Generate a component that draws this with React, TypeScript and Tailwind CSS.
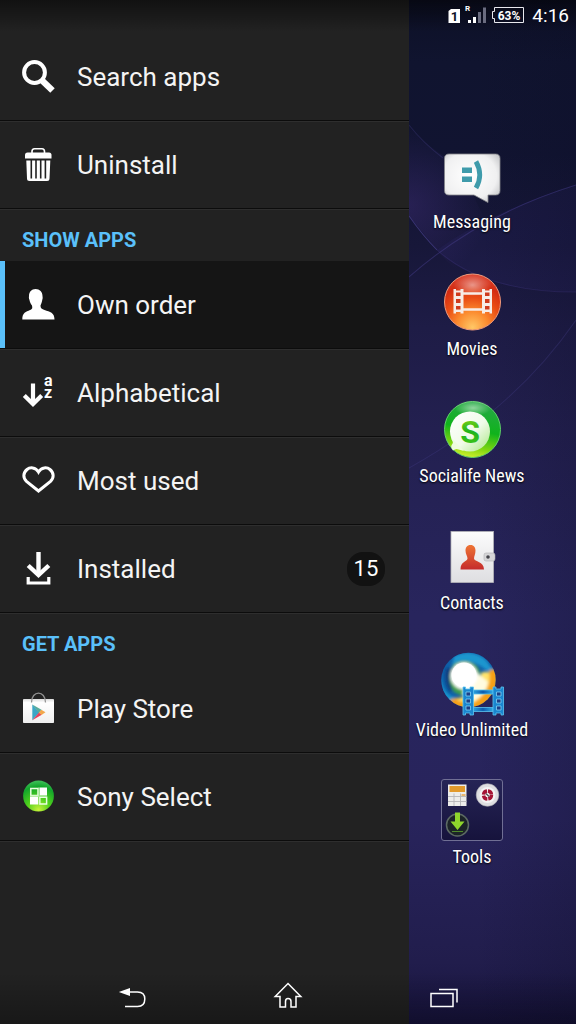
import React, { useState } from 'react';

interface MenuItem {
  id: string;
  label: string;
  icon: React.ReactNode;
  badge?: number;
}

interface AppShortcut {
  label: string;
  icon: React.ReactNode;
}

const SearchIcon = () => (
  <svg viewBox="0 0 34 34" className="w-[34px] h-[34px]" fill="none" stroke="#fff" aria-hidden="true">
    <circle cx="12.5" cy="12.5" r="10.4" strokeWidth="4" />
    <path d="M19 19.5 L30.5 30.5" strokeWidth="6.4" />
  </svg>
);

const TrashIcon = () => (
  <svg viewBox="0 0 34 34" className="w-[34px] h-[34px]" aria-hidden="true">
    <path d="M10 5 V3.5 Q10 0.8 12.5 0.8 H20 Q22.5 0.8 22.5 3.5 V5" fill="none" stroke="#fff" strokeWidth="1.6" />
    <path d="M3 7 Q3 4.5 5.5 4.5 H27 Q29.5 4.5 29.5 7 V10.5 H3 Z" fill="#fff" />
    <path d="M4.3 12.5 H28.3 L27.5 30.5 Q27.5 33 25 33 H7.5 Q5 33 5 30.5 Z" fill="#fff" />
    <path d="M9.3 12 V30.5 M14 12 V30.5 M18.7 12 V30.5 M23.4 12 V30.5" stroke="#222" strokeWidth="1.6" />
  </svg>
);

const PersonIcon = () => (
  <svg viewBox="0 0 34 34" className="w-[34px] h-[34px]" fill="#fff" aria-hidden="true">
    <path d="M13.5 1 C17.8 1 20.5 4 20.5 8 C20.5 9.3 21 9.8 20.3 11.7 C19.8 14.5 19 16 18.5 17.5 C18.3 20.3 20 21 22.5 22 C28 23.8 32.5 24.5 32.5 31.5 H0.3 C0.3 24.5 4 23.8 8 22 C10.5 21 10.5 20.3 10 17.5 C9 16 8 14.5 7.4 11.7 C6.6 9.8 7 9.3 7 8 C7 4 9.5 1 13.5 1 Z" />
  </svg>
);

const SortIcon = () => (
  <svg viewBox="0 0 34 34" className="w-[34px] h-[34px] overflow-visible" aria-hidden="true">
    <path d="M11 7.5 V28 M2.3 19.5 L11 28 L19.7 19.5" fill="none" stroke="#fff" strokeWidth="4.2" />
    <text fontSize="16" fontWeight="700" fill="#fff" className="font-['Roboto',sans-serif]">
      <tspan x="22" y="9.5">a</tspan>
      <tspan x="22" y="22">z</tspan>
    </text>
  </svg>
);

const HeartIcon = () => (
  <svg viewBox="0 0 34 34" className="w-[34px] h-[34px]" fill="none" stroke="#fff" strokeWidth="3" aria-hidden="true">
    <path d="M16.5 8 C13.5 3 8 3 5 5.5 C1 9 0.8 13.8 4.5 17.3 L16.5 27 L28.5 17.3 C32.2 13.8 32 9 28 5.5 C25 3 19.5 3 16.5 8 Z" />
  </svg>
);

const DownloadIcon = () => (
  <svg viewBox="0 0 34 34" className="w-[34px] h-[34px]" fill="none" stroke="#fff" aria-hidden="true">
    <path d="M16.5 0 V22" strokeWidth="4.4" />
    <path d="M6.2 13.5 L16.5 23 L26.8 13.5" strokeWidth="4.4" />
    <path d="M6.2 25 V31 H26.8 V25" strokeWidth="3.2" />
  </svg>
);

const PlayStoreIcon = () => (
  <svg viewBox="0 0 34 34" className="w-[34px] h-[34px]" aria-hidden="true">
    <defs>
      <linearGradient id="bag" x1="0" y1="0" x2="0" y2="1">
        <stop offset="0" stopColor="#dcdcdc" />
        <stop offset="0.15" stopColor="#ffffff" />
        <stop offset="1" stopColor="#efefef" />
      </linearGradient>
    </defs>
    <rect x="1" y="7" width="31" height="24" rx="0.8" fill="url(#bag)" />
    <path d="M9.5 10.5 C9.5 -2 23.5 -2 23.5 10.5" fill="none" stroke="#929292" strokeWidth="1.3" />
    <path d="M10.3 12.5 V28.3 L17.5 20.5 Z" fill="#3ba6c6" />
    <path d="M10.3 12.5 L19.5 17.8 L17 21 Z" fill="#5aab9b" />
    <path d="M10.3 28.3 L17 20.5 L19.8 22.8 Z" fill="#e8415d" />
    <path d="M16.8 20.7 L19.3 17.7 L23.5 20.3 L19.5 23 Z" fill="#f2a74b" />
  </svg>
);

const SonySelectIcon = () => (
  <svg viewBox="0 0 34 34" className="w-[34px] h-[34px]" aria-hidden="true">
    <defs>
      <radialGradient id="select" cx="0.5" cy="0.95" r="0.95">
        <stop offset="0" stopColor="#c8f23a" />
        <stop offset="0.4" stopColor="#4fd01c" />
        <stop offset="0.8" stopColor="#12a62c" />
        <stop offset="1" stopColor="#3fc05a" />
      </radialGradient>
    </defs>
    <circle cx="16.5" cy="16" r="15.4" fill="url(#select)" />
    <path d="M17.5 7.5 H25 V15.5 H17.5 Z M8 16.5 H16 V24.5 H8 Z" fill="#fff" />
    <path d="M8.8 8.5 H16 V15.5 H8.8 Z M17.8 17.3 H24.6 V24 H17.8 Z" fill="none" stroke="#e9ffe0" strokeWidth="1.5" />
    <path d="M8 16 H25 M16.8 7.5 V24.5" stroke="#bdf0b0" strokeWidth="0.8" />
  </svg>
);

const MessagingIcon = () => (
  <svg viewBox="0 0 64 64" className="w-16 h-16" aria-hidden="true">
    <defs>
      <radialGradient id="bubble" cx="0.45" cy="0.45" r="0.75">
        <stop offset="0" stopColor="#ffffff" />
        <stop offset="0.65" stopColor="#f0f0f1" />
        <stop offset="1" stopColor="#b4b5b8" />
      </radialGradient>
    </defs>
    <path d="M9 10 H55.5 Q60 10 60 14.5 V46.5 Q60 51 55.5 51 H48 V58.5 L34 51 H9 Q4.5 51 4.5 46.5 V14.5 Q4.5 10 9 10 Z" fill="url(#bubble)" stroke="#85868c" strokeWidth="0.8" />
    <path d="M22 23.5 H32 V29 H22 Z M22 32.5 H32 V38 H22 Z" fill="#3f9bab" />
    <path d="M36 17.5 Q43.5 31 36 44" fill="none" stroke="#3f9bab" strokeWidth="4.8" />
  </svg>
);

const MoviesIcon = () => (
  <svg viewBox="0 0 64 64" className="w-16 h-16" aria-hidden="true">
    <defs>
      <radialGradient id="movies" cx="0.5" cy="0.95" r="0.95">
        <stop offset="0" stopColor="#ffc766" />
        <stop offset="0.3" stopColor="#fb8a2e" />
        <stop offset="0.55" stopColor="#ea4d14" />
        <stop offset="0.8" stopColor="#d42c12" />
        <stop offset="1" stopColor="#d9402c" />
      </radialGradient>
      <radialGradient id="moviesShine">
        <stop offset="0" stopColor="#fff" stopOpacity="0.5" />
        <stop offset="1" stopColor="#fff" stopOpacity="0" />
      </radialGradient>
    </defs>
    <circle cx="32.5" cy="31" r="28" fill="url(#movies)" stroke="#f09a7c" strokeWidth="1" />
    <ellipse cx="32.5" cy="14" rx="19" ry="11" fill="url(#moviesShine)" />
    <path d="M23 22.5 H42 M23 38.5 H42" stroke="#f7ece6" strokeWidth="2.6" />
    <path d="M13.500 18 H16 V19.500 H20.500 V18 H23.500 V42.500 H20.500 V41 H16 V42.500 H13.500 Z M42 18 H45 V19.500 H49.500 V18 H52 V42.500 H49.500 V41 H45 V42.500 H42 Z" fill="#f7ece6" />
    <path d="M16 21.500 H20.500 V25 H16 Z M16 28 H20.500 V32 H16 Z M16 35 H20.500 V38.500 H16 Z M45 21.500 H49.500 V25 H45 Z M45 28 H49.500 V32 H45 Z M45 35 H49.500 V38.500 H45 Z" fill="#cf3a1c" />
  </svg>
);

const SocialifeIcon = () => (
  <svg viewBox="0 0 64 64" className="w-16 h-16" aria-hidden="true">
    <defs>
      <linearGradient id="social" x1="0.6" y1="0" x2="0.4" y2="1">
        <stop offset="0" stopColor="#27a848" />
        <stop offset="0.5" stopColor="#10b31c" />
        <stop offset="0.8" stopColor="#7ed60f" />
        <stop offset="1" stopColor="#d3f02f" />
      </linearGradient>
      <radialGradient id="socialShine">
        <stop offset="0" stopColor="#fff" stopOpacity="0.5" />
        <stop offset="1" stopColor="#fff" stopOpacity="0" />
      </radialGradient>
      <linearGradient id="socialInner" x1="0" y1="0" x2="1" y2="1">
        <stop offset="0" stopColor="#ffffff" />
        <stop offset="0.55" stopColor="#f1fbea" />
        <stop offset="1" stopColor="#a9e683" />
      </linearGradient>
      <linearGradient id="letter" x1="0.5" y1="0" x2="0.5" y2="1">
        <stop offset="0" stopColor="#9fdc16" />
        <stop offset="0.5" stopColor="#1fb41c" />
        <stop offset="1" stopColor="#4ecb18" />
      </linearGradient>
    </defs>
    <circle cx="32.5" cy="31.5" r="28" fill="url(#social)" stroke="#5fd06a" strokeWidth="1" />
    <ellipse cx="33" cy="10" rx="18" ry="8" fill="url(#socialShine)" />
    <circle cx="30" cy="33.5" r="20" fill="url(#socialInner)" />
    <path d="M11.5 40 Q14 44 12 46.5 Q10 49 13 52.5 Q16 50 18.5 51.5 L24 53 Z" fill="#eefbe0" />
    <text x="30" y="45" textAnchor="middle" fontSize="32" fontWeight="700" fill="url(#letter)" className="font-['Roboto',sans-serif]">S</text>
  </svg>
);

const ContactsIcon = () => (
  <svg viewBox="0 0 64 64" className="w-16 h-16" aria-hidden="true">
    <defs>
      <linearGradient id="contact" x1="0" y1="0" x2="0" y2="1">
        <stop offset="0" stopColor="#ee7434" />
        <stop offset="1" stopColor="#c52c2c" />
      </linearGradient>
      <linearGradient id="book" x1="0" y1="0" x2="0" y2="1">
        <stop offset="0" stopColor="#fcfcfc" />
        <stop offset="1" stopColor="#dedee1" />
      </linearGradient>
    </defs>
    <rect x="11" y="6.5" width="42.5" height="51" fill="url(#book)" stroke="#b5b5ba" strokeWidth="0.8" />
    <path d="M30.5 20 C34 20 35.5 22.5 35.5 25.5 C35.5 29 34 31 34 33.5 C34.5 37 44 36 44 44.5 H20.5 C20.5 36 27 37 27.5 33.5 C27.5 31 25.5 29 25.5 25.5 C25.5 22.5 27 20 30.5 20 Z" fill="url(#contact)" />
    <rect x="44" y="28" width="11" height="8" rx="2" fill="#d6d6d8" stroke="#b0b0b4" strokeWidth="0.6" />
    <circle cx="48" cy="32" r="1.8" fill="#44444a" />
  </svg>
);

const VideoIcon = () => (
  <svg viewBox="0 0 64 64" className="w-16 h-16" aria-hidden="true">
    <defs>
      <clipPath id="disc">
        <circle cx="28.5" cy="28" r="27.2" />
      </clipPath>
      <filter id="soft" x="-30%" y="-30%" width="160%" height="160%">
        <feGaussianBlur stdDeviation="1.6" />
      </filter>
      <linearGradient id="film" x1="0" y1="0" x2="1" y2="0">
        <stop offset="0" stopColor="#2aa4e0" />
        <stop offset="0.5" stopColor="#0d5cae" />
        <stop offset="1" stopColor="#2fa9e2" />
      </linearGradient>
    </defs>
    <g clipPath="url(#disc)">
      <rect width="64" height="64" fill="#0f5fa8" />
      <g filter="url(#soft)">
        <path d="M14 4 Q32 -4 46 8 L54 20 L46 18 Q30 4 12 14 Z" fill="#1b96cf" />
        <path d="M0 22 Q2 44 18 46 L10 52 L-4 36 Z" fill="#1296cf" />
        <path d="M6 16 Q3 30 10 40 L14 36 Q8 26 12 16 Z" fill="#103c80" />
        <path d="M58 16 Q60 44 38 60 L8 54 Q8 47 16 46 Q42 46 50 18 Z" fill="#f6a012" />
        <path d="M49 20 Q53 38 32 52 L16 48 Q34 42 42 20 Z" fill="#ffe36a" />
        <path d="M14 12 Q26 5 37 14 Q44 24 38 38 Q26 48 14 40 Q5 26 14 12 Z" fill="#3f9f4c" />
        <path d="M34 18 L48 30 Q46 42 34 49 L22 42 Z" fill="#fffbe0" />
        <circle cx="24" cy="24" r="13.5" fill="#fff" />
      </g>
      <circle cx="24" cy="23" r="12.5" fill="#fff" />
    </g>
    <path d="M33 40 H53 M33 57.5 H53" stroke="url(#film)" strokeWidth="4" />
    <path d="M33 38 H53 M33 42 H53 M33 55.5 H53 M33 59.5 H53" stroke="#5cc4f0" strokeWidth="0.8" />
    <path d="M23 35 H25.5 V37 H30 V35 H33.5 V63 H30 V61 H25.5 V63 H23 Z M53 35 H56 V37 H61 V35 H63.5 V63 H61 V61 H56 V63 H53 Z" fill="#1a86cf" stroke="#5cc4f0" strokeWidth="0.8" />
    <path d="M26 40 H30.5 V44 H26 Z M26 47 H30.5 V51 H26 Z M26 54 H30.5 V58 H26 Z M56.5 40 H61 V44 H56.5 Z M56.5 47 H61 V51 H56.5 Z M56.5 54 H61 V58 H56.5 Z" fill="#1d3f86" stroke="#7fd2f5" strokeWidth="0.8" />
  </svg>
);

const ToolsIcon = () => (
  <svg viewBox="0 0 64 64" className="w-16 h-16" aria-hidden="true">
    <defs>
      <linearGradient id="folder" x1="0" y1="0" x2="0" y2="1">
        <stop offset="0" stopColor="#262456" />
        <stop offset="1" stopColor="#16133c" />
      </linearGradient>
    </defs>
    <rect x="1.5" y="0.5" width="61" height="61" rx="2.5" fill="url(#folder)" stroke="#706f94" strokeWidth="1" />
    <rect x="8" y="5.5" width="18.5" height="21.5" fill="#ededeb" />
    <rect x="9.5" y="7" width="15.5" height="6" fill="#e29a2c" />
    <path d="M8 17.5 H26.5 M8 22.5 H26.5 M14 14.5 V27 M20.5 14.5 V27" stroke="#b5b5b8" strokeWidth="0.9" />
    <path d="M21.5 16 H25.5" stroke="#e7a548" strokeWidth="1.5" />
    <circle cx="47.5" cy="16" r="11.3" fill="#dedee1" stroke="#a9a9b2" strokeWidth="0.6" />
    <circle cx="47.5" cy="16" r="8" fill="#f4f4f5" />
    <circle cx="47.5" cy="16" r="4" fill="#fff" stroke="#a51535" strokeWidth="3.4" strokeDasharray="5.3 0.98" />
    <path d="M46 14.5 L49 17.5" stroke="#555" strokeWidth="1.5" />
    <circle cx="17.5" cy="46" r="11" fill="#1c2427" stroke="#5c6a63" strokeWidth="1.5" />
    <path d="M15 33.5 H20 V42.5 H24.5 L17.5 51 L10.5 42.5 H15 Z" fill="#8fd52c" />
    <path d="M12 52.5 H23" stroke="#4f8a2b" strokeWidth="1" />
  </svg>
);

const MAIN_ITEMS: MenuItem[] = [
  { id: 'search', label: 'Search apps', icon: <SearchIcon /> },
  { id: 'uninstall', label: 'Uninstall', icon: <TrashIcon /> },
];

const SHOW_ITEMS: MenuItem[] = [
  { id: 'own', label: 'Own order', icon: <PersonIcon /> },
  { id: 'alphabetical', label: 'Alphabetical', icon: <SortIcon /> },
  { id: 'used', label: 'Most used', icon: <HeartIcon /> },
  { id: 'installed', label: 'Installed', icon: <DownloadIcon />, badge: 15 },
];

const GET_ITEMS: MenuItem[] = [
  { id: 'play', label: 'Play Store', icon: <PlayStoreIcon /> },
  { id: 'select', label: 'Sony Select', icon: <SonySelectIcon /> },
];

const SHORTCUTS: AppShortcut[] = [
  { label: 'Messaging', icon: <MessagingIcon /> },
  { label: 'Movies', icon: <MoviesIcon /> },
  { label: 'Socialife News', icon: <SocialifeIcon /> },
  { label: 'Contacts', icon: <ContactsIcon /> },
  { label: 'Video Unlimited', icon: <VideoIcon /> },
  { label: 'Tools', icon: <ToolsIcon /> },
];

interface MenuRowProps {
  item: MenuItem;
  active?: boolean;
  onClick?: () => void;
}

const MenuRow: React.FC<MenuRowProps> = ({ item, active, onClick }) => (
  <li className="border-b border-[#0c0c0c] shadow-[0_1px_0_#2e2e2e]">
    <button
      type="button"
      onClick={onClick}
      className={`flex items-center w-full h-[87px] border-l-[5px] pl-[17px] pr-6 text-left ${
        active ? 'bg-[#151515] border-[#5ac0fa]' : 'border-transparent'
      }`}
    >
      <span className="shrink-0">{item.icon}</span>
      <span className="ml-[21px] flex-1 text-[26px] leading-8 text-[#f4f4f4]">{item.label}</span>
      {item.badge !== undefined && (
        <span className="flex items-center justify-center w-[38px] h-[34px] rounded-2xl bg-[#121212] text-[22px] leading-6 text-white">
          {item.badge}
        </span>
      )}
    </button>
  </li>
);

const SectionTitle: React.FC<{ children: React.ReactNode }> = ({ children }) => (
  <h2 className="h-[52px] pl-[22px] pt-[19px] text-xl leading-6 font-bold text-[#5ac0fa]">{children}</h2>
);

const Wallpaper = () => (
  <svg viewBox="0 0 167 1024" preserveAspectRatio="none" className="absolute inset-0 w-full h-full" aria-hidden="true">
    <defs>
      <linearGradient id="sky" x1="0" y1="0" x2="0" y2="1">
        <stop offset="0" stopColor="#0d1026" />
        <stop offset="0.06" stopColor="#10142f" />
        <stop offset="0.15" stopColor="#111431" />
        <stop offset="0.24" stopColor="#171739" />
        <stop offset="0.32" stopColor="#1e1c46" />
        <stop offset="0.42" stopColor="#232050" />
        <stop offset="0.6" stopColor="#28255d" />
        <stop offset="0.8" stopColor="#28245c" />
        <stop offset="0.94" stopColor="#211d4c" />
        <stop offset="1" stopColor="#181440" />
      </linearGradient>
      <radialGradient id="sheen" gradientUnits="userSpaceOnUse" cx="0" cy="205" r="80">
        <stop offset="0" stopColor="#43307f" stopOpacity="0.4" />
        <stop offset="1" stopColor="#43307f" stopOpacity="0" />
      </radialGradient>
      <linearGradient id="edge" x1="0" y1="0" x2="1" y2="0">
        <stop offset="0.4" stopColor="#0b0b24" stopOpacity="0" />
        <stop offset="1" stopColor="#0b0b24" stopOpacity="0.2" />
      </linearGradient>
    </defs>
    <rect width="167" height="1024" fill="url(#sky)" />
    <path d="M0 125 Q18 148 50 165 L110 292 Q60 290 28 250 L0 216 Z" fill="url(#sheen)" />
    <path d="M28 250 Q80 212 167 185 V292 Q70 292 28 250 Z" fill="#3b3384" fillOpacity="0.14" />
    <rect width="167" height="1024" fill="url(#edge)" />
    <g fill="none" stroke="#4a4190">
      <path d="M0 277 Q70 215 167 185" strokeOpacity="0.45" />
      <path d="M0 216 Q14 236 28 250" strokeOpacity="0.7" />
      <path d="M28 250 Q75 292 167 292" strokeOpacity="0.25" />
      <path d="M0 468 Q105 410 167 320" strokeOpacity="0.3" />
      <path d="M0 125 Q14 143 34 158" strokeOpacity="0.3" />
    </g>
  </svg>
);

const StatusBar = () => (
  <header className="absolute inset-x-0 top-0 z-10 flex h-8 items-center justify-end pr-[7px] bg-linear-to-b from-black/50 to-transparent text-white">
    <svg viewBox="0 0 79 28" className="w-[79px] h-7" aria-hidden="true">
      <path d="M3.5 9 L6 7 H15 V21 H3.5 Z" fill="#fff" />
      <text x="9.5" y="18.5" textAnchor="middle" fontSize="13" fontWeight="700" fill="#0d1026" className="font-['Roboto',sans-serif]">1</text>
      <text x="20" y="8.5" fontSize="8" fontWeight="700" fill="#fff" className="font-['Roboto',sans-serif]">R</text>
      <path d="M23 18 H26 V21 H23 Z M28 15 H31 V21 H28 Z" fill="#fff" />
      <path d="M33 10 H36 V21 H33 Z M38 5.5 H41 V21 H38 Z" fill="#6a6c80" />
      <path d="M49.5 5.5 H78.5 V20.5 H49.5 V16.5 H47.5 V9.5 H49.5 Z" fill="none" stroke="#e8e8ee" />
      <text x="64" y="17.5" textAnchor="middle" fontSize="12" fontWeight="700" fill="#fff" className="font-['Roboto',sans-serif]">63%</text>
    </svg>
    <time className="ml-2 text-[19px] leading-6">4:16</time>
  </header>
);

const NavBar = () => (
  <nav className="absolute inset-x-0 bottom-0 z-10 flex h-[52px] justify-center bg-linear-to-b from-transparent to-black/30">
    <button type="button" aria-label="Back" className="flex w-[27%] items-center justify-center">
      <svg viewBox="0 0 28 28" className="w-7 h-7" fill="none" stroke="#fff" strokeWidth="1.5" aria-hidden="true">
        <path d="M10 8 H19.5 Q26.8 8 26.8 15 Q26.8 22.5 19.5 22.5 H7" />
        <path d="M0.8 8 L12 4 V12 Z" fill="#fff" stroke="none" />
      </svg>
    </button>
    <button type="button" aria-label="Home" className="flex w-[27%] items-center justify-center">
      <svg viewBox="0 0 28 28" className="w-7 h-7 overflow-visible" fill="none" stroke="#fff" strokeWidth="1.5" aria-hidden="true">
        <path d="M14 -0.5 L26.8 12.5 H22 V23 H17 V17.5 Q17 14.5 14 14.5 Q11.5 14.5 11.5 17.5 V23 H6 V12.5 H1.2 Z" />
      </svg>
    </button>
    <button type="button" aria-label="Recent apps" className="flex w-[27%] items-center justify-center">
      <svg viewBox="0 0 28 28" className="w-7 h-7" fill="none" stroke="#fff" strokeWidth="1.5" aria-hidden="true">
        <path d="M1 9.5 H23 V22.5 H1 Z M9 5.5 H27 V18.5" />
      </svg>
    </button>
  </nav>
);

const App: React.FC = () => {
  const [order, setOrder] = useState('own');

  return (
    <div className="relative flex min-h-screen overflow-hidden bg-[#28255d] font-['Roboto',sans-serif]">
      <StatusBar />

      <aside className="w-[71%] shrink-0 bg-[#222222] pt-[33px] pb-[52px]">
        <ul>
          {MAIN_ITEMS.map((item) => (
            <MenuRow key={item.id} item={item} />
          ))}
        </ul>
        <SectionTitle>SHOW APPS</SectionTitle>
        <ul>
          {SHOW_ITEMS.map((item) => (
            <MenuRow key={item.id} item={item} active={item.id === order} onClick={() => setOrder(item.id)} />
          ))}
        </ul>
        <SectionTitle>GET APPS</SectionTitle>
        <ul>
          {GET_ITEMS.map((item) => (
            <MenuRow key={item.id} item={item} />
          ))}
        </ul>
      </aside>

      <main className="relative flex-1 pt-36 pb-[52px]">
        <Wallpaper />
        <ul className="relative flex w-[126px] flex-col">
          {SHORTCUTS.map((app) => (
            <li key={app.label}>
              <button type="button" className="flex h-[127px] w-full flex-col items-center">
                {app.icon}
                <span className="mt-0.5 font-['Roboto_Condensed','Liberation_Sans_Narrow',sans-serif] text-lg leading-6 whitespace-nowrap text-white [text-shadow:0_1px_2px_#000]">
                  {app.label}
                </span>
              </button>
            </li>
          ))}
        </ul>
      </main>

      <NavBar />
    </div>
  );
};

export default App;
